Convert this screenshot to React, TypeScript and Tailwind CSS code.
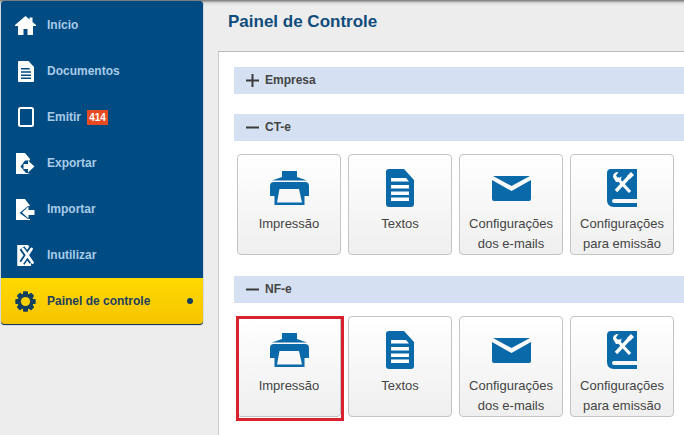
const PrintIcon = () => (
  <svg width="39" height="34" viewBox="0 0 39 34" fill="#0a69a8">
    <path d="M12 0H27V6L37 9.5H2L12 6Z" />
    <path fillRule="evenodd" d="M4 11H35Q39 11 39 15V25H34.5V34H4.5V25H0V15Q0 11 4 11ZM9.5 18L7 31.5H32L29 18Z" />
  </svg>
);

const DocIcon = () => (
  <svg width="28" height="38" viewBox="0 0 28 38">
    <path fill="#0a69a8" d="M3 0H18L28 11V35Q28 38 25 38H3Q0 38 0 35V3Q0 0 3 0Z" />
    <path fill="#fff" d="M5 9H20L23 12.5H5ZM5 16H23V19.5H5ZM5 22.5H23V26H5ZM5 28.5H23V32H5Z" />
  </svg>
);

const MailIcon = () => (
  <svg width="39" height="25" viewBox="0 0 39 25" fill="#0a69a8">
    <path d="M1 0H38L19.5 10Z" />
    <path d="M0 4L19.5 15L39 4V23Q39 25 37 25H2Q0 25 0 23Z" />
  </svg>
);

const BookIcon = () => (
  <svg width="30" height="38" viewBox="0 0 30 38">
    <path fill="#0a69a8" d="M4 0H30V30H7Q5 30 5 32Q5 34 7 34H30V38H7Q0 38 0 31V4Q0 0 4 0Z" />
    <path fill="none" stroke="#fff" strokeWidth="3.2" d="M10 9L23 23" />
    <path fill="none" stroke="#fff" strokeWidth="3.4" d="M22 8L9 22" />
    <path fill="#fff" d="M6 8Q6 3 11.5 3L9 6.5L11 9.5L14.5 7.5Q14.5 13 9 13Z" />
    <path fill="#fff" d="M20 7L24 3L27 6L23 10Z" />
  </svg>
);

const HomeIcon = () => (
  <svg width="21" height="19" viewBox="0 0 21 19" fill="#fff">
    <path d="M10.5 0L14.5 3.4V1.5H17.5V6L21 9V10H18V19H12.5V13H8.5V19H3V10H0V9Z" />
  </svg>
);

const PageIcon = () => (
  <svg width="16" height="21" viewBox="0 0 16 21">
    <path fill="#fff" d="M1 0H10.5L16 6V20Q16 21 15 21H1Q0 21 0 20V1Q0 0 1 0Z" />
    <path fill="#004b82" d="M3 7H11L12.5 8.5H3ZM3 10.2H13V11.7H3ZM3 13.4H13V14.9H3ZM3 16.6H13V18.1H3Z" />
  </svg>
);

const TabletIcon = () => (
  <svg width="16" height="20" viewBox="0 0 16 20">
    <rect x="1" y="1" width="14" height="18" rx="1.5" fill="none" stroke="#fff" strokeWidth="2" />
  </svg>
);

const ExportIcon = () => (
  <svg width="19" height="21" viewBox="0 0 19 21">
    <path fill="#fff" d="M0 0H9L14 6V20L11 21H0Z" />
    <path fill="#004b82" d="M4.5 13.5L9 7.5H13L19 7V20H10Z" />
    <path fill="#fff" d="M7.5 11V16H12V19.5L18.5 13.5L12 7.5V11Z" />
  </svg>
);

const ImportIcon = () => (
  <svg width="19" height="21" viewBox="0 0 19 21">
    <path fill="#fff" d="M0 0H9L15 8L6 14L14 20V21H0Z" />
    <path fill="#004b82" d="M3.5 14L12 7L16 7V20H12Z" />
    <path fill="#fff" d="M18.5 11V16H12.5V19.5L6 13.5L12.5 7.5V11Z" />
  </svg>
);

const VoidIcon = () => (
  <svg width="18" height="21" viewBox="0 0 18 21">
    <path fill="#fff" d="M0 0H11L14 4V21H0Z" />
    <path fill="none" stroke="#004b82" strokeWidth="6" d="M5 3L15 17M15 3L5 18" />
    <path fill="none" stroke="#fff" strokeWidth="2.8" strokeLinecap="round" d="M6 4L15.5 17.5M14.5 4L5.5 17.5" />
    <path fill="#004b82" d="M0 0H1V21H0Z" opacity="0.25" />
  </svg>
);

const GearIcon = () => (
  <svg width="21" height="21" viewBox="0 0 21 21" fill="#123f5f">
    {[0, 45, 90, 135].map((deg) => (
      <rect key={deg} x="8" y="0.3" width="5" height="20.4" rx="0.8" transform={`rotate(${deg} 10.5 10.5)`} />
    ))}
    <circle cx="10.5" cy="10.5" r="8" />
    <circle cx="10.5" cy="10.5" r="4.6" fill="#fbd000" />
  </svg>
);

const menu = [
  { label: "Início", icon: <HomeIcon /> },
  { label: "Documentos", icon: <PageIcon /> },
  { label: "Emitir", icon: <TabletIcon />, badge: "414" },
  { label: "Exportar", icon: <ExportIcon /> },
  { label: "Importar", icon: <ImportIcon /> },
  { label: "Inutilizar", icon: <VoidIcon /> },
];

const cards = [
  { icon: <PrintIcon />, lines: ["Impressão"] },
  { icon: <DocIcon />, lines: ["Textos"] },
  { icon: <MailIcon />, lines: ["Configurações", "dos e-mails"] },
  { icon: <BookIcon />, lines: ["Configurações", "para emissão"] },
];

const Bar = ({ sign, title }: { sign: string; title: string }) => (
  <div className="h-[27px] flex items-center bg-[#d5e1f2] pl-[12px] pb-[1px] gap-[6px] text-[12px] font-bold text-[#444]">
    {sign === "+" ? (
      <svg width="13" height="13" viewBox="0 0 13 13" fill="#3a3a3a">
        <path d="M5.5 0H7.5V5.5H13V7.5H7.5V13H5.5V7.5H0V5.5H5.5Z" />
      </svg>
    ) : (
      <svg width="13" height="13" viewBox="0 0 13 13" fill="#3a3a3a">
        <path d="M0 5.5H13V7.5H0Z" />
      </svg>
    )}
    <span>{title}</span>
  </div>
);

const Cards = ({ marked }: { marked?: boolean }) => (
  <div className="flex gap-[7px] ml-[3px] mt-[13px]">
    {cards.map((card, index) => (
      <div
        key={index}
        className="relative w-[104px] h-[101px] shrink-0 flex flex-col items-center border border-[#c4c4c4] rounded-[4px] bg-gradient-to-b from-white to-[#efefef] text-[#444]"
      >
        <div className="h-[38px] shrink-0 mt-[14px] flex items-center justify-center">{card.icon}</div>
        <div className="mt-[7px] text-center text-[13px] leading-[20px] whitespace-nowrap">
          {card.lines.map((line) => (
            <div key={line}>{line}</div>
          ))}
        </div>
        {marked && index === 0 && (
          <div className="absolute left-[-2px] top-[-1px] w-[108px] h-[105px] border-[3px] border-[#d8232f]" />
        )}
      </div>
    ))}
  </div>
);

export default function App() {
  return (
    <div className="w-[684px] h-[435px] overflow-hidden flex bg-[linear-gradient(#777_0px,#ddd_3px,#ededed_6px)] font-['Liberation_Sans',Arial,sans-serif]">
      <div className="w-[218px] shrink-0 pl-[1px] pt-[1px]">
        <div className="w-[202px] pt-[1px] rounded-[4px] overflow-hidden bg-[#004b82] border-b border-[#0f3a5c] shadow-[0_0_1px_#0f3a5c]">
          {menu.map((item) => (
            <div key={item.label} className="h-[46px] flex items-center text-[12px] font-bold text-[#a9cbe8]">
              <div className="w-[46px] pl-[3px] flex justify-center">{item.icon}</div>
              <span>{item.label}</span>
              {item.badge && (
                <span className="ml-[6px] w-[21px] h-[15px] flex items-center justify-center bg-[#e84b22] text-white text-[10px]">
                  {item.badge}
                </span>
              )}
            </div>
          ))}
          <div className="h-[46px] flex items-center bg-gradient-to-b from-[#ffd900] to-[#f6c400] text-[12px] font-bold text-[#1f4060]">
            <div className="w-[46px] pl-[3px] flex justify-center">
              <GearIcon />
            </div>
            <span className="flex-1">Painel de controle</span>
            <span className="w-[6px] h-[6px] rounded-full bg-[#123f5f] mr-[10px]" />
          </div>
        </div>
      </div>
      <div className="flex-1 min-w-0 flex flex-col">
        <div className="h-[52px] shrink-0 pl-[10px] pt-[12px] border-b border-[#bbb] text-[17px] leading-[20px] font-bold text-[#0f4c7c]">
          Painel de Controle
        </div>
        <div className="flex-1 bg-white border-l border-[#ccc] pl-[15px] pt-[15px]">
          <Bar sign="+" title="Empresa" />
          <div className="h-[20px]" />
          <Bar sign="-" title="CT-e" />
          <Cards />
          <div className="h-[21px]" />
          <Bar sign="-" title="NF-e" />
          <Cards marked />
        </div>
      </div>
    </div>
  );
}
